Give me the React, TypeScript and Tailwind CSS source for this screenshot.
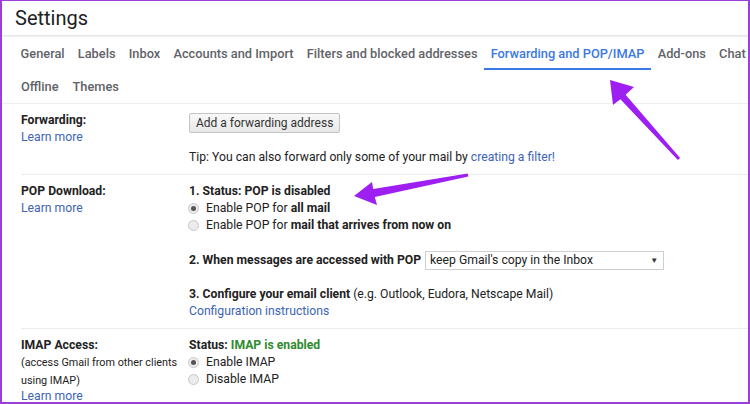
import React from "react";

const tabs1 = [
  "General",
  "Labels",
  "Inbox",
  "Accounts and Import",
  "Filters and blocked addresses",
  "Forwarding and POP/IMAP",
  "Add-ons",
  "Chat",
];

function Radio({ checked }: { checked?: boolean }) {
  return (
    <span className="inline-flex items-center justify-center w-[11px] h-[11px] rounded-full border border-[#c8c8c8] bg-[#ececec] mr-[7px] ml-[-1px]">
      {checked ? <span className="w-[5px] h-[5px] rounded-full bg-[#555]" /> : null}
    </span>
  );
}

export default function App() {
  return (
    <div
      className="relative w-[750px] h-[404px] overflow-hidden bg-white border-t border-l-2 border-r-2 border-b-2 border-[#9b3fd6] text-[#222]"
      style={{ fontFamily: "Roboto, 'Liberation Sans', Arial, sans-serif" }}
    >
      <div className="h-[34px] pl-[13px] flex items-center text-[20px] text-[#202124]">Settings</div>
      <div className="h-[2px] bg-gradient-to-b from-[#e2e2e2] to-[#f6f6f6]" />
      <div className="flex pl-[12px] whitespace-nowrap text-[12.8px] font-medium">
        {tabs1.map((t) => (
          <div
            key={t}
            className={
              t === "Forwarding and POP/IMAP"
                ? "h-[33px] px-[6.6px] flex items-center text-[#3b78e7] shadow-[inset_0_-2px_0_#3b78e7]"
                : "h-[33px] px-[6.6px] flex items-center text-[#5f6368]"
            }
          >
            {t}
          </div>
        ))}
      </div>
      <div className="flex pl-[12px] whitespace-nowrap text-[12.8px] font-medium text-[#5f6368] border-b border-[#efefef]">
        <div className="h-[33px] px-[7px] flex items-center">Offline</div>
        <div className="h-[33px] px-[7px] flex items-center">Themes</div>
      </div>

      <div className="text-[12.2px] leading-[17px]">
        {/* Forwarding */}
        <div className="flex pt-[8px] pb-[8px]">
          <div className="w-[187px] pl-[19px] shrink-0 whitespace-nowrap">
            <div className="font-bold">Forwarding:</div>
            <div className="text-[#3d64b5]">Learn more</div>
          </div>
          <div>
            <div className="pt-[1px]">
              <span className="inline-flex items-center h-[20px] px-[6px] border border-[#c3c3c3] rounded-[2px] bg-gradient-to-b from-[#f8f8f8] to-[#e8e8e8] text-[12px] text-[#333]">
                Add a forwarding address
              </span>
            </div>
            <div className="mt-[16px]">
              Tip: You can also forward only some of your mail by{" "}
              <span className="text-[#3d64b5]">creating a filter!</span>
            </div>
          </div>
        </div>

        <div className="ml-[19px] border-t border-[#ececec]" />

        {/* POP */}
        <div className="flex pt-[8px] pb-[8px]">
          <div className="w-[187px] pl-[19px] shrink-0 whitespace-nowrap">
            <div className="font-bold">POP Download:</div>
            <div className="text-[#3d64b5]">Learn more</div>
          </div>
          <div>
            <div className="font-bold">1. Status: POP is disabled</div>
            <div className="flex items-center">
              <Radio checked />
              <span>
                Enable POP for <b>all mail</b>
              </span>
            </div>
            <div className="flex items-center">
              <Radio />
              <span>
                Enable POP for <b>mail that arrives from now on</b>
              </span>
            </div>
            <div className="flex items-center mt-[17px]">
              <span className="font-bold mr-[4px]">2. When messages are accessed with POP</span>
              <div className="w-[239px] h-[19px] border border-[#cfcfcf] flex items-center justify-between pl-[4px] pr-[5px]">
                <span>keep Gmail's copy in the Inbox</span>
                <span className="text-[8px] text-[#333]">▼</span>
              </div>
            </div>
            <div className="mt-[16px]">
              <b>3. Configure your email client</b> (e.g. Outlook, Eudora, Netscape Mail)
            </div>
            <div className="text-[#3d64b5]">Configuration instructions</div>
          </div>
        </div>

        <div className="ml-[19px] border-t border-[#ececec]" />

        {/* IMAP */}
        <div className="flex pt-[8px]">
          <div className="w-[187px] pl-[19px] shrink-0 whitespace-nowrap">
            <div className="font-bold">IMAP Access:</div>
            <div className="text-[10.8px] leading-[18px]">(access Gmail from other clients</div>
            <div className="text-[10.8px] leading-[17px]">using IMAP)</div>
            <div className="text-[#3d64b5] leading-[15px]">Learn more</div>
          </div>
          <div>
            <div className="font-bold">
              Status: <span className="text-[#2e8b2e]">IMAP is enabled</span>
            </div>
            <div className="flex items-center">
              <Radio checked />
              <span>Enable IMAP</span>
            </div>
            <div className="flex items-center">
              <Radio />
              <span>Disable IMAP</span>
            </div>
          </div>
        </div>
      </div>

      <svg className="absolute left-0 top-0 pointer-events-none" width="750" height="404" viewBox="0 0 750 404">
        <polygon
          fill="#9d1ff2"
          points="608,79 632,86 623.6,93.7 678.1,157 675.9,159 618.4,98.3 611,104"
        />
        <polygon
          fill="#9d1ff2"
          points="352,195 370,181 371.2,188.1 465.7,172.5 466.3,175.5 372.8,195.9 375,204"
        />
      </svg>
    </div>
  );
}
